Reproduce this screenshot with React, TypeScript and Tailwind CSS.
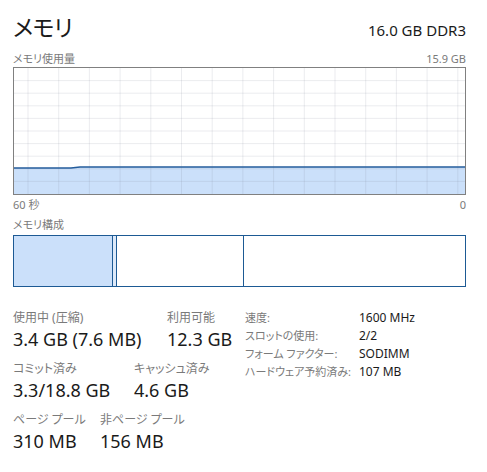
import React from "react";

const font = "font-['Noto_Sans','Noto_Sans_CJK_JP',sans-serif] [font-feature-settings:'palt']";

const W = 451;
const H = 126;

const UsageChart: React.FC = () => {
  const hLines = Array.from({ length: 9 }, (_, i) => (H / 10) * (i + 1));
  const vLines = Array.from({ length: 15 }, (_, i) => 14 + 30.7 * i);
  const line = `M0 100 L57 100 L66 99 L${W} 99`;
  const area = `${line} L${W} ${H} L0 ${H} Z`;

  return (
    <svg width={W} height={H} className="block">
      <path d={area} fill="#cbe0fa" />
      {hLines.map((y) => (
        <line key={`h${y}`} x1={0} x2={W} y1={y} y2={y} stroke="rgba(120,130,150,0.15)" strokeWidth={1} />
      ))}
      {vLines.map((x) => (
        <line key={`v${x}`} x1={x} x2={x} y1={0} y2={H} stroke="rgba(120,130,150,0.15)" strokeWidth={1} />
      ))}
      <path d={line} fill="none" stroke="#245c9c" strokeWidth={1.3} />
    </svg>
  );
};

interface StatProps {
  label: string;
  value: string;
  width?: string;
}

const Stat: React.FC<StatProps> = ({ label, value, width }) => (
  <div className={width}>
    <div className="text-[12px] leading-[16px] text-[#7a7a7a] whitespace-nowrap">{label}</div>
    <div className="mt-[2px] text-[18px] leading-[22px] text-[#1a1a1a] whitespace-nowrap">{value}</div>
  </div>
);

const specs: [string, string][] = [
  ["速度:", "1600 MHz"],
  ["スロットの使用:", "2/2"],
  ["フォーム ファクター:", "SODIMM"],
  ["ハードウェア予約済み:", "107 MB"],
];

export default function App() {
  return (
    <div className={`${font} w-[487px] h-[472px] bg-white pl-[13px] pt-[14px] overflow-hidden`}>
      <div className="w-[453px] h-[26px] flex items-baseline justify-between">
        <h1 className="text-[23px] leading-[26px] tracking-[-0.5px] text-[#1a1a1a] font-normal">メモリ</h1>
        <span className="text-[15px] leading-[20px] text-[#1a1a1a]">16.0 GB DDR3</span>
      </div>

      <div className="mt-[12px] w-[453px] flex justify-between text-[11px] leading-[14px] text-[#7a7a7a]">
        <span>メモリ使用量</span>
        <span>15.9 GB</span>
      </div>

      <div className="mt-[1px] w-[453px] h-[128px] border border-[#808080]">
        <UsageChart />
      </div>

      <div className="mt-[3px] w-[453px] flex justify-between text-[11px] leading-[14px] text-[#7a7a7a]">
        <span>60 秒</span>
        <span>0</span>
      </div>

      <div className="mt-[6px] text-[11px] leading-[14px] text-[#7a7a7a]">メモリ構成</div>

      <div className="mt-[3px] w-[453px] h-[52px] border border-[#1d5a94] flex">
        <div className="w-[99px] bg-[#cbe0fa] border-r border-[#1d5a94]" />
        <div className="w-[4px] bg-[#dde9f9] border-r border-[#1d5a94]" />
        <div className="w-[127px] border-r border-[#1d5a94]" />
        <div className="flex-1" />
      </div>

      <div className="mt-[23px] flex items-start">
        <div className="w-[232px]">
          <div className="flex">
            <Stat label="使用中 (圧縮)" value="3.4 GB (7.6 MB)" width="w-[154px]" />
            <Stat label="利用可能" value="12.3 GB" />
          </div>
          <div className="mt-[11px] flex">
            <Stat label="コミット済み" value="3.3/18.8 GB" width="w-[121px]" />
            <Stat label="キャッシュ済み" value="4.6 GB" />
          </div>
          <div className="mt-[11px] flex">
            <Stat label="ページ プール" value="310 MB" width="w-[87px]" />
            <Stat label="非ページ プール" value="156 MB" />
          </div>
        </div>

        <div className="-mt-[1px] grid grid-cols-[114px_auto] auto-rows-[18px] text-[12px] leading-[18px]">
          {specs.map(([k, v]) => (
            <React.Fragment key={k}>
              <span className="text-[#7a7a7a] whitespace-nowrap text-[11px]">{k}</span>
              <span className="text-[#1a1a1a] whitespace-nowrap">{v}</span>
            </React.Fragment>
          ))}
        </div>
      </div>
    </div>
  );
}
